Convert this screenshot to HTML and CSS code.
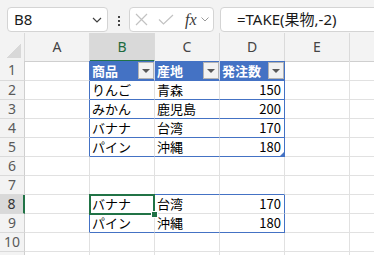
FILE: index.html
```html
<!DOCTYPE html>
<html lang="ja">
<head>
    <meta charset="UTF-8">
    <meta name="viewport" content="width=device-width, initial-scale=1.0">
    <title>TAKE関数</title>
    <link rel="stylesheet" href="styles.css">
</head>
<body>
    <!-- 数式バー -->
    <div class="toolbar">
        <div class="namebox">
            <span class="ref">B8</span>
            <svg width="10" height="6" viewBox="0 0 10 6"><path d="M1 1l4 4 4-4" fill="none" stroke="#404040" stroke-width="1.2"/></svg>
        </div>
        <div class="grip"><i></i><i></i><i></i></div>
        <div class="fxbox">
            <svg class="ic-x" width="13" height="13" viewBox="0 0 13 13"><path d="M1 1l11 11M12 1L1 12" fill="none" stroke="#c2c2c2" stroke-width="1.2"/></svg>
            <svg class="ic-ok" width="16" height="11" viewBox="0 0 16 11"><path d="M1 5.5l4.5 4.5L15 1" fill="none" stroke="#c2c2c2" stroke-width="1.2"/></svg>
            <span class="fx">fx</span>
            <svg class="ic-more" width="8" height="5" viewBox="0 0 8 5"><path d="M.5 .5L4 4 7.5.5" fill="none" stroke="#9a9a9a" stroke-width="1"/></svg>
        </div>
        <div class="formula">=TAKE(果物,-2)</div>
    </div>

    <!-- シート -->
    <div class="sheet">
        <div class="row head">
            <div class="ch corner"></div>
            <div class="ch">A</div>
            <div class="ch sel">B</div>
            <div class="ch">C</div>
            <div class="ch">D</div>
            <div class="ch">E</div>
            <div class="ch"></div>
        </div>
        <div class="row r1">
            <div class="rh">1</div>
            <div class="c edge"></div>
            <div class="th">商品<span class="dd"></span></div>
            <div class="th">産地<span class="dd"></span></div>
            <div class="th right">発注数<span class="dd"></span></div>
            <div class="c"></div>
            <div class="c"></div>
        </div>
        <div class="row">
            <div class="rh">2</div>
            <div class="c edge"></div>
            <div class="c line">りんご</div>
            <div class="c line">青森</div>
            <div class="c line num right">150</div>
            <div class="c"></div>
            <div class="c"></div>
        </div>
        <div class="row">
            <div class="rh">3</div>
            <div class="c edge"></div>
            <div class="c line">みかん</div>
            <div class="c line">鹿児島</div>
            <div class="c line num right">200</div>
            <div class="c"></div>
            <div class="c"></div>
        </div>
        <div class="row">
            <div class="rh">4</div>
            <div class="c edge"></div>
            <div class="c line">バナナ</div>
            <div class="c line">台湾</div>
            <div class="c line num right">170</div>
            <div class="c"></div>
            <div class="c"></div>
        </div>
        <div class="row">
            <div class="rh">5</div>
            <div class="c edge"></div>
            <div class="c line">パイン</div>
            <div class="c line">沖縄</div>
            <div class="c line num right resize">180</div>
            <div class="c"></div>
            <div class="c"></div>
        </div>
        <div class="row">
            <div class="rh">6</div>
            <div class="c"></div>
            <div class="c"></div>
            <div class="c"></div>
            <div class="c"></div>
            <div class="c"></div>
            <div class="c"></div>
        </div>
        <div class="row">
            <div class="rh">7</div>
            <div class="c"></div>
            <div class="c line"></div>
            <div class="c line"></div>
            <div class="c line"></div>
            <div class="c"></div>
            <div class="c"></div>
        </div>
        <div class="row">
            <div class="rh sel">8</div>
            <div class="c edge"></div>
            <div class="c active">バナナ<span class="sel-box"></span><span class="fill-handle"></span></div>
            <div class="c">台湾</div>
            <div class="c num right">170</div>
            <div class="c"></div>
            <div class="c"></div>
        </div>
        <div class="row">
            <div class="rh">9</div>
            <div class="c edge"></div>
            <div class="c line">パイン</div>
            <div class="c line">沖縄</div>
            <div class="c line num right">180</div>
            <div class="c"></div>
            <div class="c"></div>
        </div>
        <div class="row">
            <div class="rh">10</div>
            <div class="c"></div>
            <div class="c"></div>
            <div class="c"></div>
            <div class="c"></div>
            <div class="c"></div>
            <div class="c"></div>
        </div>
        <div class="row">
            <div class="rh">11</div>
            <div class="c"></div>
            <div class="c"></div>
            <div class="c"></div>
            <div class="c"></div>
            <div class="c"></div>
            <div class="c"></div>
        </div>
    </div>
</body>
</html>
```

FILE: styles.css
```css
* {
    margin: 0;
    padding: 0;
    box-sizing: border-box;
}
body {
    width: 374px;
    height: 255px;
    overflow: hidden;
    background-color: #fff;
    font-family: "Noto Sans", "Noto Sans CJK JP", sans-serif;
}

/* 数式バー */
.toolbar {
    display: flex;
    align-items: flex-start;
    height: 33px;
    padding: 7px 0 0 7px;
    background-color: #f3f3f3;
    overflow: hidden;
}
.namebox {
    display: flex;
    align-items: center;
    justify-content: space-between;
    width: 101px;
    height: 25px;
    padding: 0 5px 0 6px;
    background-color: #fff;
    border: 1px solid #d4d4d4;
    border-radius: 4px;
}
.ref {
    font-size: 15px;
    line-height: 23px;
    color: #1b1b1b;
}
.grip {
    display: flex;
    flex-direction: column;
    align-items: center;
    gap: 2px;
    width: 21px;
    padding-top: 9px;
}
.grip i {
    width: 2px;
    height: 2px;
    background-color: #444;
}
.fxbox {
    display: flex;
    align-items: center;
    width: 85px;
    height: 25px;
    padding-left: 5px;
    background-color: #fff;
    border: 1px solid #d4d4d4;
    border-radius: 4px;
}
.ic-ok {
    margin-left: 10px;
}
.fx {
    margin-left: 11px;
    font-family: "Liberation Serif", serif;
    font-style: italic;
    font-size: 16px;
    line-height: 20px;
    color: #3a3a3a;
}
.ic-more {
    margin-left: 4px;
}
.formula {
    flex: 1;
    height: 25px;
    margin: 0 -10px 0 6px;
    padding-left: 16px;
    background-color: #fff;
    border: 1px solid #d4d4d4;
    border-radius: 4px;
    font-family: "Noto Sans", "Noto Sans CJK JP", sans-serif;
    font-size: 15px;
    line-height: 23px;
    color: #1b1b1b;
    white-space: nowrap;
}

/* シート */
.sheet {
    width: 374px;
    overflow: hidden;
}
.row {
    display: grid;
    grid-template-columns: 25px repeat(6, 65px);
    width: 415px;
    height: 19px;
}
.row.head {
    height: 28px;
}
.row.r1 {
    height: 20px;
}
.ch {
    background-color: #f3f3f3;
    border-right: 1px solid #dadada;
    border-bottom: 1px solid #cfcfcf;
    text-align: center;
    font-size: 14px;
    line-height: 27px;
    color: #444;
}
.ch.sel {
    background-color: #d9d9d9;
    border-bottom: 2px solid #217346;
    color: #1d6b40;
}
.corner {
    background: linear-gradient(135deg, transparent 50%, #d8d8d8 50%) no-repeat right 3px bottom 3px / 14px 14px, #f3f3f3;
}
.rh {
    background-color: #f3f3f3;
    border-right: 1px solid #cfcfcf;
    border-bottom: 1px solid #dadada;
    text-align: center;
    font-size: 14px;
    line-height: 18px;
    color: #5a5a5a;
    overflow: hidden;
}
.rh.sel {
    background-color: #d9d9d9;
    border-right: 2px solid #217346;
    color: #333;
}
.c {
    padding: 0 2px;
    border-right: 1px solid #e1e1e1;
    border-bottom: 1px solid #e1e1e1;
    font-family: "Noto Sans CJK JP", sans-serif;
    font-size: 13px;
    line-height: 18px;
    color: #000;
    white-space: nowrap;
    overflow: hidden;
}
.num {
    text-align: right;
    padding-right: 3px;
}
/* テーブルの枠 */
.c.edge,
.right {
    border-right-color: #4472c4;
}
.line {
    border-bottom-color: #4472c4;
}
.th {
    display: flex;
    align-items: center;
    justify-content: space-between;
    padding-left: 2px;
    background-color: #4472c4;
    border-right: 1px solid #d3dcee;
    border-bottom: 1px solid #4472c4;
    font-family: "Noto Sans CJK JP", sans-serif;
    font-size: 13px;
    font-weight: bold;
    color: #fff;
    white-space: nowrap;
}
.th.right {
    border-right-color: #4472c4;
}
.dd {
    display: flex;
    align-items: center;
    justify-content: center;
    width: 16px;
    height: 17px;
    background-color: #f2f2f2;
    border: 1px solid #b4b4b4;
}
.dd::after {
    content: "";
    border-left: 4px solid transparent;
    border-right: 4px solid transparent;
    border-top: 4px solid #595959;
}
.resize {
    position: relative;
}
.resize::after {
    content: "";
    position: absolute;
    right: 0;
    bottom: 0;
    border-left: 4px solid transparent;
    border-bottom: 4px solid #4472c4;
}

/* 選択セル */
.active {
    position: relative;
    overflow: visible;
}
.sel-box {
    position: absolute;
    left: -1px;
    top: -1px;
    width: 66px;
    height: 21px;
    border: 2px solid #217346;
}
.fill-handle {
    position: absolute;
    left: 61px;
    top: 16px;
    width: 7px;
    height: 7px;
    background-color: #217346;
    border: 1px solid #fff;
}
```
